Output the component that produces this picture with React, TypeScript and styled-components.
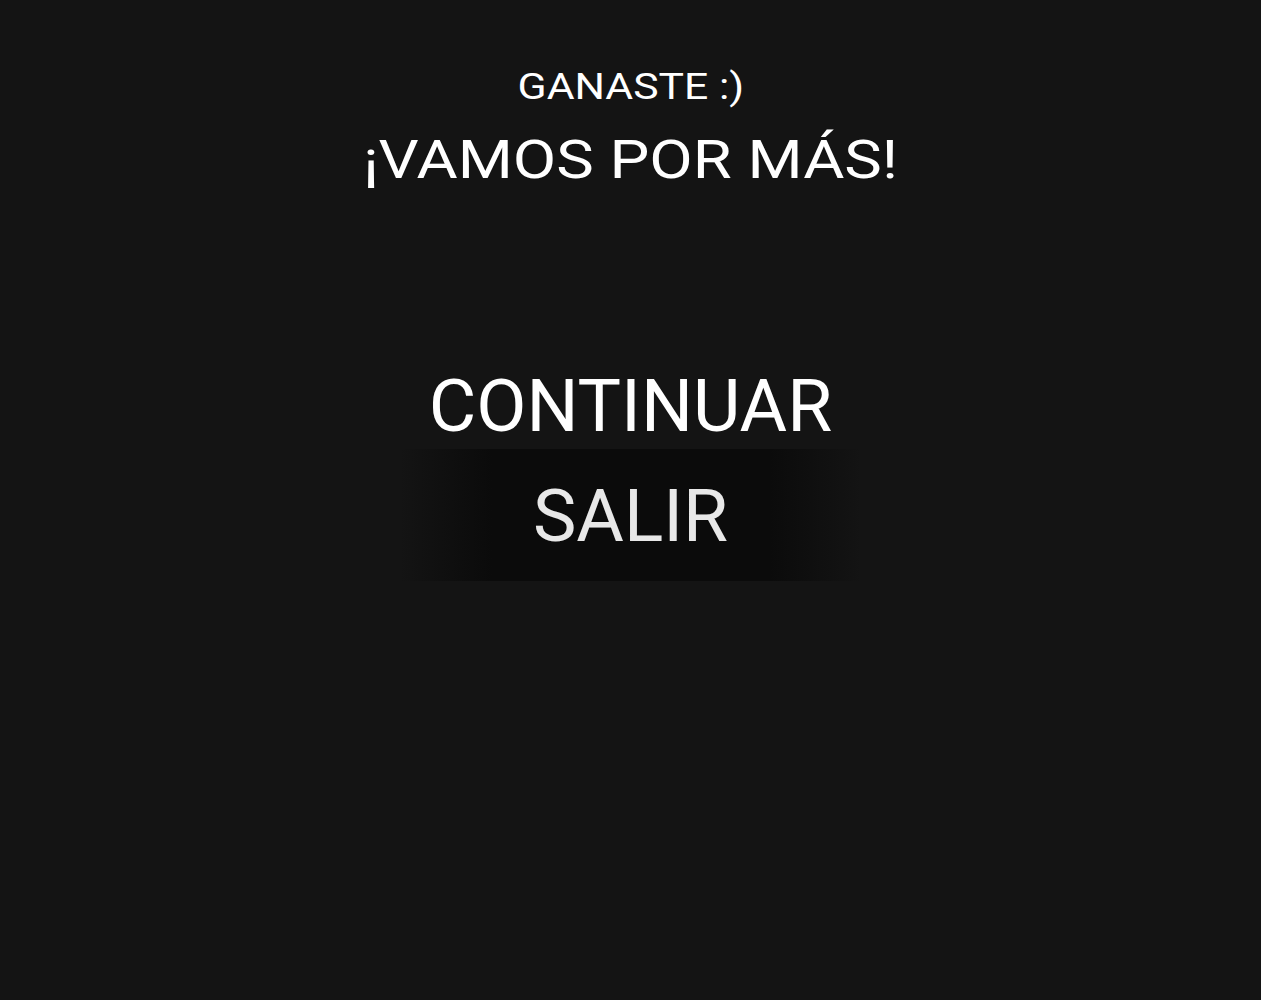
import React from "react";
import styled, { createGlobalStyle } from "styled-components";

const Global = createGlobalStyle`
  html, body { margin: 0; padding: 0; background: #141414; }
  body { font-family: Roboto, "Noto Sans", sans-serif; color: #fff; }
  #root { min-height: 1000px; }
`;

const Screen = styled.main`
  display: flex;
  flex-direction: column;
  align-items: center;
  min-height: 1000px;
  background: #141414;
`;

const Header = styled.header`
  display: flex;
  flex-direction: column;
  align-items: center;
  padding-top: 62px;
`;

const Subtitle = styled.h2`
  margin: 0;
  font-family: Roboto, sans-serif;
  font-weight: 400;
  font-size: 36.5px;
  line-height: 50px;
  color: #fff;
  transform: scaleX(1.17);
`;

const Title = styled.h1`
  margin: 18px 0 0;
  font-family: Roboto, sans-serif;
  font-weight: 400;
  font-size: 54px;
  line-height: 60px;
  color: #fff;
  transform: scaleX(1.17);
`;

const Menu = styled.nav`
  display: flex;
  flex-direction: column;
  align-items: center;
  margin-top: 173px;
`;

const MenuItem = styled.button<{ $selected?: boolean }>`
  box-sizing: border-box;
  border: 0;
  margin: 0;
  padding: ${(p) => (p.$selected ? "2px 0 0" : "0")};
  width: 462px;
  height: ${(p) => (p.$selected ? "132px" : "86px")};
  font-family: Roboto, sans-serif;
  font-weight: 400;
  font-size: 73px;
  line-height: ${(p) => (p.$selected ? "130px" : "86px")};
  color: ${(p) => (p.$selected ? "#e8e8e8" : "#fff")};
  background: ${(p) =>
    p.$selected
      ? "linear-gradient(to right, rgba(11,11,11,0) 0%, #0b0b0b 20%, #0b0b0b 80%, rgba(11,11,11,0) 100%)"
      : "transparent"};
  cursor: pointer;
`;

export default function App() {
  return (
    <>
      <Global />
      <Screen>
        <Header>
          <Subtitle>GANASTE :)</Subtitle>
          <Title>¡VAMOS POR MÁS!</Title>
        </Header>
        <Menu>
          <MenuItem>CONTINUAR</MenuItem>
          <MenuItem $selected>SALIR</MenuItem>
        </Menu>
      </Screen>
    </>
  );
}
